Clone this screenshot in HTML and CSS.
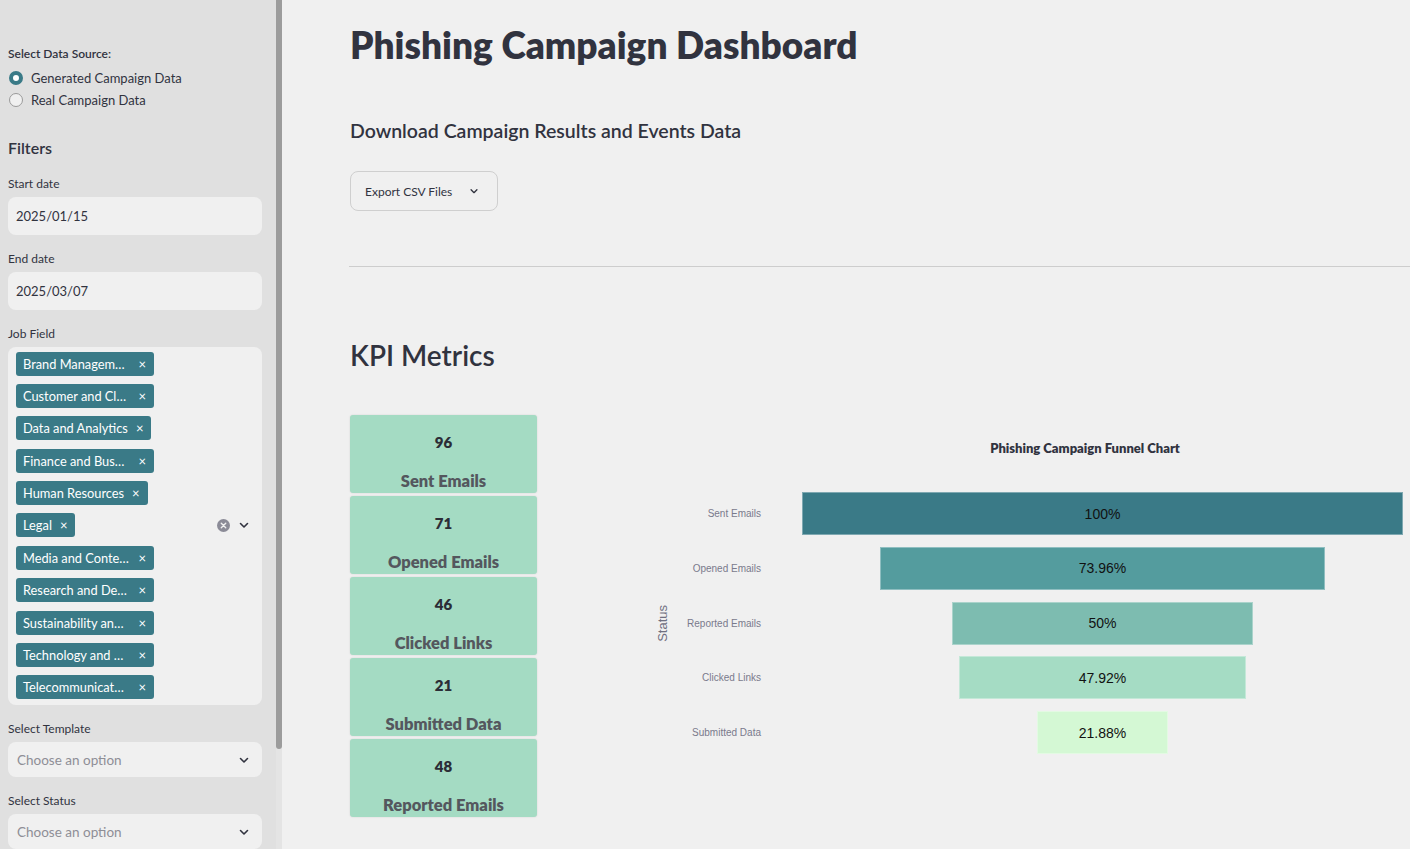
FILE: index.html
```html
<!DOCTYPE html>
<html lang="en">
<head>
<meta charset="utf-8">
<title>Phishing Campaign Dashboard</title>
<link rel="stylesheet" href="styles.css">
</head>
<body>
<aside class="sidebar">
  <div class="sb-inner">
    <div class="field-label strong">Select Data Source:</div>
    <div class="radio-group">
      <label class="radio"><span class="dot on"></span>Generated Campaign Data</label>
      <label class="radio"><span class="dot"></span>Real Campaign Data</label>
    </div>
    <h4 class="sb-heading">Filters</h4>

    <div class="field">
      <div class="field-label">Start date</div>
      <div class="input">2025/01/15</div>
    </div>
    <div class="field">
      <div class="field-label">End date</div>
      <div class="input">2025/03/07</div>
    </div>
    <div class="field">
      <div class="field-label">Job Field</div>
      <div class="multi">
        <div class="tags">
          <span class="tag trunc"><span class="tag-text">Brand Managem…</span><span class="tag-x">×</span></span>
          <span class="tag trunc"><span class="tag-text">Customer and Cl…</span><span class="tag-x">×</span></span>
          <span class="tag"><span class="tag-text">Data and Analytics</span><span class="tag-x">×</span></span>
          <span class="tag trunc"><span class="tag-text">Finance and Bus…</span><span class="tag-x">×</span></span>
          <span class="tag"><span class="tag-text">Human Resources</span><span class="tag-x">×</span></span>
          <span class="tag"><span class="tag-text">Legal</span><span class="tag-x">×</span></span>
          <span class="tag trunc"><span class="tag-text">Media and Conte…</span><span class="tag-x">×</span></span>
          <span class="tag trunc"><span class="tag-text">Research and De…</span><span class="tag-x">×</span></span>
          <span class="tag trunc"><span class="tag-text">Sustainability an…</span><span class="tag-x">×</span></span>
          <span class="tag trunc"><span class="tag-text">Technology and …</span><span class="tag-x">×</span></span>
          <span class="tag trunc"><span class="tag-text">Telecommunicat…</span><span class="tag-x">×</span></span>
        </div>
        <div class="multi-icons">
          <svg class="clear-ic" width="13" height="13" viewBox="0 0 14 14"><circle cx="7" cy="7" r="7" fill="#8b8b97"/><path d="M4.6 4.6l4.8 4.8M9.4 4.6l-4.8 4.8" stroke="#f0f0f0" stroke-width="1.5" stroke-linecap="round"/></svg>
          <svg class="chev" width="12" height="12" viewBox="0 0 12 12"><path d="M2.5 4.5L6 8l3.5-3.5" fill="none" stroke="#31333f" stroke-width="1.6" stroke-linecap="round" stroke-linejoin="round"/></svg>
        </div>
      </div>
    </div>
    <div class="field">
      <div class="field-label">Select Template</div>
      <div class="select"><span class="placeholder">Choose an option</span><svg class="chev" width="12" height="12" viewBox="0 0 12 12"><path d="M2.5 4.5L6 8l3.5-3.5" fill="none" stroke="#31333f" stroke-width="1.6" stroke-linecap="round" stroke-linejoin="round"/></svg></div>
    </div>
    <div class="field">
      <div class="field-label">Select Status</div>
      <div class="select"><span class="placeholder">Choose an option</span><svg class="chev" width="12" height="12" viewBox="0 0 12 12"><path d="M2.5 4.5L6 8l3.5-3.5" fill="none" stroke="#31333f" stroke-width="1.6" stroke-linecap="round" stroke-linejoin="round"/></svg></div>
    </div>
  </div>
</aside>
<div class="scroll-track"><div class="scroll-thumb"></div></div>

<main class="main">
  <div class="content">
    <h1 class="title">Phishing Campaign Dashboard</h1>
    <h3 class="subtitle">Download Campaign Results and Events Data</h3>
    <button class="export">Export CSV Files<svg class="chev-s" width="10" height="10" viewBox="0 0 12 12"><path d="M2.5 4.5L6 8l3.5-3.5" fill="none" stroke="#31333f" stroke-width="1.6" stroke-linecap="round" stroke-linejoin="round"/></svg></button>
    <hr class="divider">
    <h2 class="section">KPI Metrics</h2>

    <div class="kpi-row">
      <div class="cards">
        <div class="card"><div class="num">96</div><div class="lbl">Sent Emails</div></div>
        <div class="card"><div class="num">71</div><div class="lbl">Opened Emails</div></div>
        <div class="card"><div class="num">46</div><div class="lbl">Clicked Links</div></div>
        <div class="card"><div class="num">21</div><div class="lbl">Submitted Data</div></div>
        <div class="card"><div class="num">48</div><div class="lbl">Reported Emails</div></div>
      </div>

      <div class="chart">
        <div class="chart-title">Phishing Campaign Funnel Chart</div>
        <div class="chart-body">
          <div class="axis-title"><span>Status</span></div>
          <div class="ticks">
            <div class="tick">Sent Emails</div>
            <div class="tick">Opened Emails</div>
            <div class="tick">Reported Emails</div>
            <div class="tick">Clicked Links</div>
            <div class="tick">Submitted Data</div>
          </div>
          <div class="plot">
            <div class="bar-row"><div class="bar b1" style="width:100%">100%</div></div>
            <div class="bar-row"><div class="bar b2" style="width:73.96%">73.96%</div></div>
            <div class="bar-row"><div class="bar b3" style="width:50%">50%</div></div>
            <div class="bar-row"><div class="bar b4" style="width:47.92%">47.92%</div></div>
            <div class="bar-row"><div class="bar b5" style="width:21.88%">21.88%</div></div>
          </div>
        </div>
      </div>
    </div>
  </div>
</main>
</body>
</html>
```

FILE: styles.css
```css
* { box-sizing: border-box; }
html, body { margin: 0; padding: 0; height: 100%; }
body {
  display: flex;
  height: 849px;
  overflow: hidden;
  background: #f0f0f0;
  color: #31333f;
  font-family: Lato, "Open Sans", sans-serif;
}

/* ---------- sidebar ---------- */
.sidebar {
  width: 276px;
  flex: none;
  height: 100%;
  background: #e0e0e0;
  overflow: hidden;
}
.scroll-track {
  width: 6px;
  flex: none;
  height: 100%;
  background: #e4e4e4;
}
.scroll-thumb {
  height: 749px;
  background: #9c9c9c;
  border-radius: 0 0 3px 3px;
}

.sb-inner {
  padding: 46px 14px 40px 8px;
  display: flex;
  flex-direction: column;
}
.field-label {
  font-size: 12px;
  line-height: 16px;
  color: #31333f;
}
.field-label.strong { font-weight: 600; }
.radio-group {
  margin-top: 5px;
  display: flex;
  flex-direction: column;
}
.radio {
  display: flex;
  align-items: center;
  height: 22px;
  font-size: 13px;
  color: #31333f;
}
.dot {
  width: 14px;
  height: 14px;
  border-radius: 50%;
  border: 1px solid #9a9a9a;
  background: #f0f0f0;
  margin-right: 8px;
  margin-left: 1px;
  flex: none;
}
.dot.on {
  border: 4px solid #3a7a87;
  background: #fff;
}
.sb-heading {
  margin: 27px 0 17.5px;
  font-size: 16px;
  line-height: 20px;
  font-weight: 600;
}
.field { display: flex; flex-direction: column; gap: 5px; margin-bottom: 16px; }
.input {
  height: 38px;
  border-radius: 8px;
  background: #f0f0f0;
  display: flex;
  align-items: center;
  padding-left: 8px;
  font-size: 13px;
}
.multi {
  background: #f0f0f0;
  border-radius: 8px;
  display: flex;
  align-items: center;
  padding: 5px 12px 6px 8px;
}
.tags {
  flex: 1;
  display: flex;
  flex-direction: column;
  align-items: flex-start;
  gap: 8.4px;
}
.tag {
  display: inline-flex;
  align-items: center;
  height: 24px;
  background: #3a7a87;
  color: #fff;
  border-radius: 3px;
  padding: 0 8px 0 7px;
  font-size: 12.8px;
  white-space: nowrap;
}
.tag.trunc {
  width: 138px;
  justify-content: space-between;
}
.tag-x {
  margin-left: 8px;
  font-size: 13px;
}
.multi-icons {
  display: flex;
  align-items: center;
  gap: 8px;
}
.select {
  height: 35px;
  border-radius: 8px;
  background: #f0f0f0;
  display: flex;
  align-items: center;
  justify-content: space-between;
  padding: 0 12px 0 9px;
}
.placeholder { font-size: 13.5px; color: #8e8e96; }

/* ---------- main ---------- */
.main {
  flex: 1;
  height: 100%;
  overflow: hidden;
}
.content {
  width: 1200px;
  padding: 24px 0 0 68px;
}
.title {
  margin: 0;
  font-size: 37px;
  line-height: 42px;
  font-weight: 800;
  letter-spacing: 0;
}
.subtitle {
  margin: 52px 0 0;
  font-size: 19.5px;
  line-height: 26px;
  font-weight: 600;
}
.export {
  margin-top: 27px;
  height: 40px;
  width: 148px;
  display: flex;
  align-items: center;
  justify-content: space-between;
  padding: 0 18px 0 14px;
  background: #f0f0f0;
  border: 1px solid #cfcfcf;
  border-radius: 8px;
  font-family: inherit;
  font-size: 12px;
  color: #31333f;
}
.divider {
  margin: 55px 0 0 -1px;
  border: 0;
  border-top: 1px solid #cdcdcd;
}
.section {
  margin: 72px 0 0;
  font-size: 28px;
  line-height: 32px;
  font-weight: 600;
}

.kpi-row {
  margin-top: 44px;
  display: flex;
}
.cards {
  width: 187px;
  flex: none;
  display: flex;
  flex-direction: column;
  gap: 3px;
}
.card {
  height: 78px;
  background: #a4dbc3;
  border-radius: 3px;
  box-shadow: 0 0 2px rgba(0,0,0,0.12);
  display: flex;
  flex-direction: column;
  align-items: center;
  padding-top: 18px;
}
.num {
  font-size: 15px;
  line-height: 18px;
  font-weight: 800;
  color: #2b2d36;
}
.lbl {
  margin-top: 20px;
  font-size: 16.5px;
  line-height: 20px;
  font-weight: 800;
  color: #54575e;
}

.chart {
  margin-left: 103px;
  width: 890px;
  flex: none;
  display: flex;
  flex-direction: column;
}
.chart-title {
  text-align: center;
  font-size: 13px;
  font-weight: 800;
  line-height: 18px;
  margin-top: 24px;
}
.chart-body {
  margin-top: 35px;
  display: flex;
  align-items: stretch;
}
.axis-title {
  width: 44px;
  display: flex;
  align-items: center;
  justify-content: center;
  font-family: "Liberation Sans", Arial, sans-serif;
  font-size: 13px;
  color: #6f6f80;
}
.axis-title span {
  writing-mode: vertical-rl;
  transform: rotate(180deg);
}
.ticks {
  width: 77px;
  display: flex;
  flex-direction: column;
  gap: 11.75px;
  align-items: flex-end;
  font-family: "Liberation Sans", Arial, sans-serif;
  font-size: 10px;
  color: #7a7a8c;
}
.tick {
  height: 43px;
  display: flex;
  align-items: center;
}
.plot {
  margin-left: 41px;
  width: 601px;
  display: flex;
  flex-direction: column;
  gap: 11.75px;
}
.bar-row {
  height: 43px;
  display: flex;
  justify-content: center;
}
.bar {
  height: 43px;
  display: flex;
  align-items: center;
  justify-content: center;
  font-family: "Liberation Sans", Arial, sans-serif;
  font-size: 14px;
  color: #111;
  border: 1px solid rgba(255,255,255,0.35);
}
.b1 { background: #3a7a87; }
.b2 { background: #549c9e; }
.b3 { background: #7dbcb0; }
.b4 { background: #a5dcc4; }
.b5 { background: #d4f8d4; }
```
